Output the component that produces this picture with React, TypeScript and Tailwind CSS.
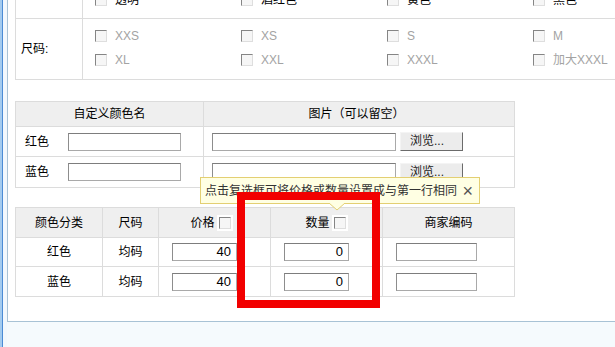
import React from "react";

const font = { fontFamily: '"Liberation Sans", "Noto Sans CJK SC", sans-serif' };

const Box: React.FC<{ framed?: boolean }> = ({ framed }) => (
  <span className={`inline-flex ${framed ? "bg-white p-[2px]" : ""}`}>
    <span className="inline-block w-[12px] h-[12px] border border-t-[#858585] border-l-[#858585] border-r-[#dedede] border-b-[#dedede] bg-[#f6f6f6]" />
  </span>
);

const Field: React.FC<{ w: string; value?: string }> = ({ w, value }) => (
  <div
    className={`${w} h-[18px] border border-[#a9a9a9] border-t-[#7d7d7d] border-l-[#8d8d8d] bg-white text-right pr-[5px] text-[13px] leading-[16px] text-black`}
  >
    {value}
  </div>
);

const Browse = () => (
  <div className="ml-[4px] w-[63px] h-[19px] border border-t-[#f4f4f4] border-l-[#f4f4f4] border-r-[#6b6b6b] border-b-[#6b6b6b] bg-[#ececec] text-[12px] leading-[17px] pl-[9px] text-[#222]">
    浏览...
  </div>
);

const Opt: React.FC<{ label: string; dim?: boolean }> = ({ label, dim }) => (
  <div className="flex items-center gap-[8px] w-[146px] h-[18px]">
    <Box />
    <span className={`text-[12px] ${dim ? "text-[#a3a3a3]" : "text-black"}`}>{label}</span>
  </div>
);

const colorRows = ["红色", "蓝色"];

export default function App() {
  return (
    <div className="relative w-[615px] h-[347px] overflow-hidden bg-[#f5fafd] flex" style={font}>
      {/* window edge */}
      <div className="flex h-full">
        <div className="w-[2px] bg-[#a3cbef]" />
        <div className="w-[1px] bg-[#4b8bd5]" />
        <div className="w-[4px] bg-[#f2f8fd]" />
      </div>

      <div className="flex-1 h-[322px] bg-white border-l border-b border-[#a8c2d5] pl-[7px]">
        {/* top option table */}
        <div className="-mt-[12px] border-l border-b border-[#dcdcdc]">
          <div className="flex h-[31px] border-b border-[#dcdcdc]">
            <div className="w-[67px] border-r border-[#dcdcdc]" />
            <div className="flex items-center pl-[12px] pb-[6px] pt-[0px]">
              <Opt label="透明" />
              <Opt label="酒红色" />
              <Opt label="黄色" />
              <Opt label="黑色" />
            </div>
          </div>
          <div className="flex h-[60px]">
            <div className="w-[67px] border-r border-[#dcdcdc] flex items-center pl-[5px] text-[12px] text-black">
              尺码:
            </div>
            <div className="flex flex-col justify-center gap-[6px] pl-[12px] pb-[2px]">
              <div className="flex">
                <Opt label="XXS" dim />
                <Opt label="XS" dim />
                <Opt label="S" dim />
                <Opt label="M" dim />
              </div>
              <div className="flex">
                <Opt label="XL" dim />
                <Opt label="XXL" dim />
                <Opt label="XXXL" dim />
                <Opt label="加大XXXL" dim />
              </div>
            </div>
          </div>
        </div>

        {/* custom colour table */}
        <div className="mt-[21px] w-[500px] border border-[#dcdcdc] text-[12px] text-black">
          <div className="flex h-[25px] bg-[#efefef] border-b border-[#dcdcdc]">
            <div className="w-[188px] border-r border-[#dcdcdc] flex items-center justify-center">自定义颜色名</div>
            <div className="flex-1 flex items-center justify-center pr-[5px]">图片（可以留空）</div>
          </div>
          {colorRows.map((c, i) => (
            <div key={c} className={`flex h-[30px] ${i === 0 ? "border-b border-[#dcdcdc]" : ""}`}>
              <div className="w-[188px] border-r border-[#dcdcdc] flex items-center pl-[9px]">
                <span className="w-[43px]">{c}</span>
                <Field w="w-[113px]" />
              </div>
              <div className="flex items-center pl-[8px]">
                <Field w="w-[184px]" />
                <Browse />
              </div>
            </div>
          ))}
        </div>

        {/* sku table */}
        <div className="mt-[19px] w-[500px] border border-[#dcdcdc] text-[12px] text-black">
          <div className="flex h-[30px] bg-[#efefef] border-b border-[#dcdcdc]">
            <div className="w-[87px] border-r border-[#dcdcdc] flex items-center justify-center">颜色分类</div>
            <div className="w-[56px] border-r border-[#dcdcdc] flex items-center justify-center">尺码</div>
            <div className="w-[112px] border-r border-[#dcdcdc] flex items-center justify-center gap-[2px] pr-[6px]">
              价格 <Box framed />
            </div>
            <div className="w-[112px] border-r border-[#dcdcdc] flex items-center justify-center gap-[2px]">
              数量 <Box framed />
            </div>
            <div className="flex-1 flex items-center justify-center">商家编码</div>
          </div>
          {colorRows.map((c, i) => (
            <div key={c} className={`flex h-[29px] ${i === 0 ? "border-b border-[#dcdcdc]" : ""}`}>
              <div className="w-[87px] border-r border-[#dcdcdc] flex items-center justify-center">{c}</div>
              <div className="w-[56px] border-r border-[#dcdcdc] flex items-center justify-center">均码</div>
              <div className="w-[112px] border-r border-[#dcdcdc] flex items-center pl-[13px]">
                <Field w="w-[65px]" value="40" />
              </div>
              <div className="w-[112px] border-r border-[#dcdcdc] flex items-center pl-[13px]">
                <Field w="w-[65px]" value="0" />
              </div>
              <div className="flex-1 flex items-center pl-[13px]">
                <Field w="w-[81px]" />
              </div>
            </div>
          ))}
        </div>
      </div>

      {/* tooltip */}
      <div className="absolute left-[200px] top-[177px] w-[280px] h-[27px] bg-[#ffffe3] border border-[#e3cf72] flex items-center pl-[4px] text-[12px] text-[#333]">
        <span>点击复选框可将价格或数量设置成与第一行相同</span>
        <span className="ml-auto mr-[6px] text-[18px] leading-none text-[#555]">×</span>
        <svg className="absolute left-[128px] top-[25px]" width="16" height="8" viewBox="0 0 16 8">
          <path d="M0 0 L8 7 L16 0" fill="#ffffe3" stroke="#e3cf72" strokeWidth="1" />
        </svg>
      </div>

      {/* highlight frame */}
      <div className="absolute left-[237px] top-[192px] w-[143px] h-[116px] border-[8px] border-[#f20000]" />
    </div>
  );
}
